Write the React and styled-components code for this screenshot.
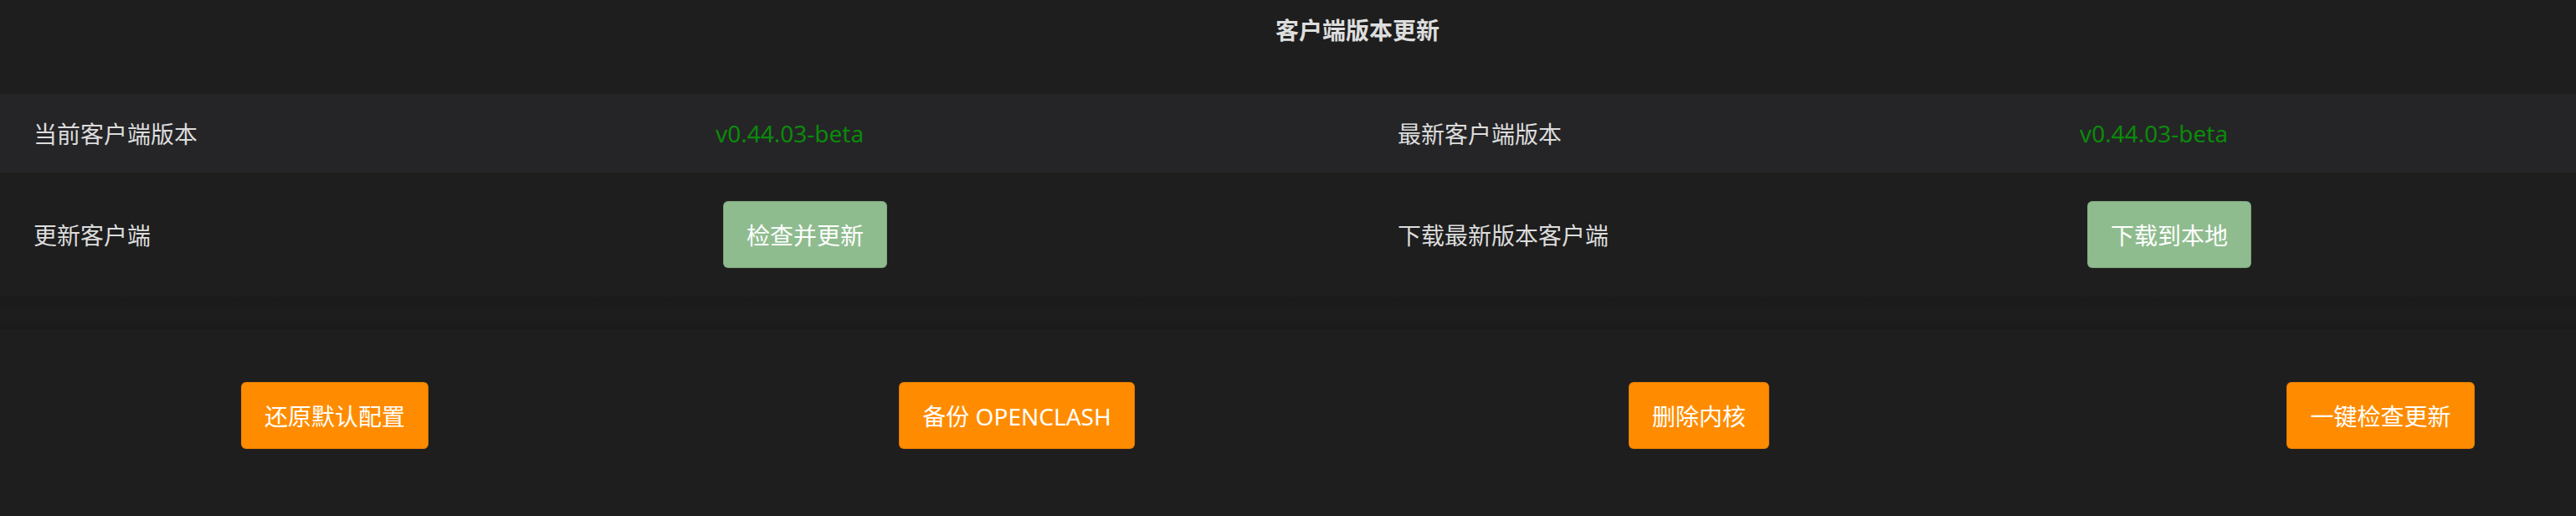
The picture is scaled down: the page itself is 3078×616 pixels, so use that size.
import React from "react";
import styled, { createGlobalStyle } from "styled-components";

//Global page styling
const GlobalStyle = createGlobalStyle`
  html, body {
    margin: 0;
    padding: 0;
    background: #1e1e1e;
    overflow: hidden;
  }
  body {
    font-family: "Noto Sans", "Noto Sans CJK SC", sans-serif;
    color: #dcdcdc;
  }
`;

const versionRow = [
  { label: "当前客户端版本", version: "v0.44.03-beta" },
  { label: "最新客户端版本", version: "v0.44.03-beta" },
];

const actionRow = [
  { label: "更新客户端", button: "检查并更新" },
  { label: "下载最新版本客户端", button: "下载到本地" },
];

const toolButtons = ["还原默认配置", "备份 OPENCLASH", "删除内核", "一键检查更新"];

function App() {
  return (
    <>
      <GlobalStyle />
      <Page>
        <Title>客户端版本更新</Title>
        <Row $striped $height={94}>
          {versionRow.map((cell) => (
            <React.Fragment key={cell.label}>
              <Cell>{cell.label}</Cell>
              <Cell>
                <Version>{cell.version}</Version>
              </Cell>
            </React.Fragment>
          ))}
        </Row>
        <Row $height={148}>
          {actionRow.map((cell) => (
            <React.Fragment key={cell.label}>
              <Cell>{cell.label}</Cell>
              <Cell>
                <Button $color="#8fbc8f" $offset={9}>
                  {cell.button}
                </Button>
              </Cell>
            </React.Fragment>
          ))}
        </Row>
        <Divider />
        <Toolbar>
          {toolButtons.map((name, i) => (
            <ToolCell key={name} $lead={i === toolButtons.length - 1 ? 181 : 0}>
              <Button $color="#ff8c00">{name}</Button>
            </ToolCell>
          ))}
        </Toolbar>
      </Page>
    </>
  );
}

const Page = styled.div`
  width: 100%;
  height: 616px;
  overflow: hidden;
`;

const Title = styled.h3`
  margin: 0 0 40px 0;
  padding-left: 166px;
  height: 72px;
  line-height: 72px;
  text-align: center;
  font-size: 28px;
  font-weight: 700;
  color: #dedede;
`;

const Row = styled.div`
  display: grid;
  grid-template-columns: repeat(3, 815px) minmax(0, 1fr);
  align-items: center;
  height: ${(p) => p.$height}px;
  background: ${(p) => (p.$striped ? "#252527" : "#1e1e1e")};
`;

const Cell = styled.div`
  padding-left: 40px;
  font-size: 28px;
  color: #dcdcdc;
  white-space: nowrap;
`;

const Version = styled.span`
  color: #0b8a0b;
`;

const Button = styled.button`
  height: 80px;
  margin-left: ${(p) => p.$offset || 0}px;
  padding: 0 27px;
  border: 1px solid rgba(0, 0, 0, 0.12);
  border-radius: 6px;
  background: ${(p) => p.$color};
  color: #ffffff;
  font-family: "Noto Sans", "Noto Sans CJK SC", sans-serif;
  font-size: 28px;
  cursor: pointer;
  white-space: nowrap;
`;

const Divider = styled.div`
  height: 39px;
  background: linear-gradient(#1a1a1a, #1d1d1d 40%, #1d1d1d 70%, #1a1a1a);
`;

const Toolbar = styled.div`
  display: grid;
  grid-template-columns: repeat(3, 815px) minmax(0, 1fr);
  padding-top: 63px;
`;

const ToolCell = styled.div`
  display: flex;
  justify-content: center;
  padding: 0 15px 0 ${(p) => p.$lead}px;
`;

export default App;
